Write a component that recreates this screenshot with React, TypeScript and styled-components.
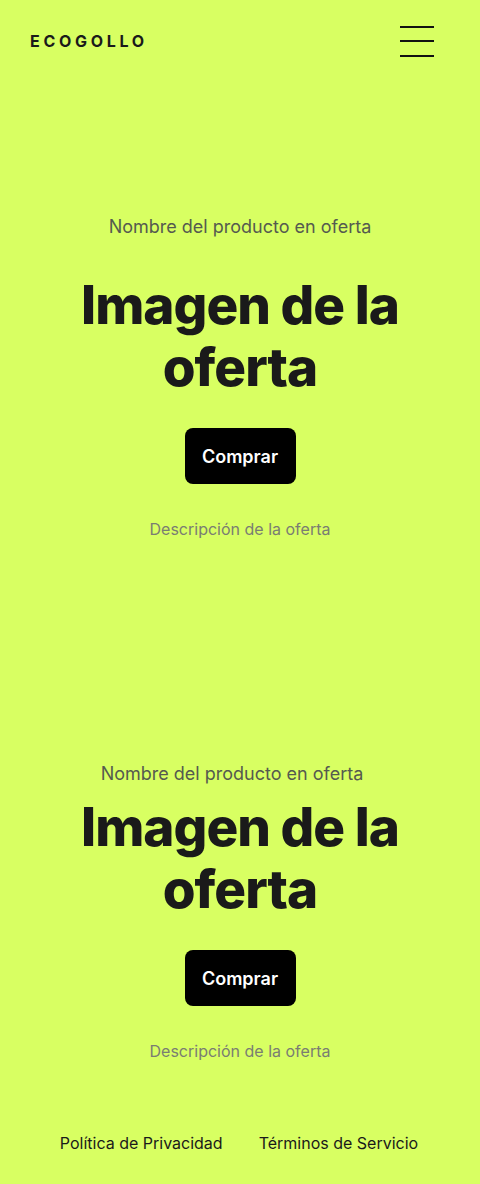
import { createGlobalStyle, styled } from "styled-components"

const GlobalStyle = createGlobalStyle`
  * { box-sizing: border-box; }
  body {
    margin: 0;
    background: #d8ff62;
    font-family: Inter, "Noto Sans", sans-serif;
    color: #1a1a1a;
  }
`

const Page = styled.div`
  min-height: 1184px;
  background: #d8ff62;
  display: flex;
  flex-direction: column;
`

const Header = styled.header`
  display: flex;
  justify-content: space-between;
  align-items: center;
  height: 82px;
  padding: 0 46px 0 30px;
`

const Logo = styled.div`
  font-family: Inter, sans-serif;
  font-weight: 700;
  font-size: 16px;
  letter-spacing: 3.7px;
  color: #1a1a1a;
`

const Burger = styled.button`
  width: 34px;
  height: 31px;
  padding: 0;
  border: 0;
  background: none;
  display: flex;
  flex-direction: column;
  justify-content: space-between;
  span {
    display: block;
    height: 2px;
    background: #111;
  }
`

const Offer = styled.section<{ $top: number }>`
  display: flex;
  flex-direction: column;
  align-items: center;
  text-align: center;
  padding-top: ${(p) => p.$top}px;
`

const ProductName = styled.p<{ $gap: number; $shift: number }>`
  margin: 0 0 ${(p) => p.$gap}px;
  padding-right: ${(p) => p.$shift * 2}px;
  font-size: 18px;
  line-height: 24px;
  color: #555a4f;
`

const Title = styled.h2`
  margin: 0;
  font-size: 53px;
  line-height: 62px;
  font-weight: 800;
  letter-spacing: -1px;
  color: #1a1a1a;
  width: 360px;
`

const BuyButton = styled.button`
  margin-top: 30px;
  width: 111px;
  height: 56px;
  border: 0;
  border-radius: 8px;
  background: #000;
  color: #fff;
  font-family: Inter, sans-serif;
  font-size: 18px;
  font-weight: 600;
`

const Description = styled.p`
  margin: 34px 0 0;
  font-size: 16px;
  line-height: 22px;
  color: #7a7d72;
`

const Footer = styled.footer`
  margin-top: auto;
  display: flex;
  justify-content: center;
  gap: 36px;
  padding: 0 2px 30px 0;
  a {
    font-size: 16px;
    line-height: 22px;
    color: #1a1a1a;
    text-decoration: none;
  }
`

function OfferBlock({ top, gap, shift = 0 }: { top: number; gap: number; shift?: number }) {
  return (
    <Offer $top={top}>
      <ProductName $gap={gap} $shift={shift}>
        Nombre del producto en oferta
      </ProductName>
      <Title>Imagen de la oferta</Title>
      <BuyButton>Comprar</BuyButton>
      <Description>Descripción de la oferta</Description>
    </Offer>
  )
}

export default function App() {
  return (
    <Page>
      <GlobalStyle />
      <Header>
        <Logo>ECOGOLLO</Logo>
        <Burger aria-label="menu">
          <span />
          <span />
          <span />
        </Burger>
      </Header>
      <OfferBlock top={133} gap={35} />
      <OfferBlock top={222} gap={10} shift={8} />
      <Footer>
        <a href="#">Política de Privacidad</a>
        <a href="#">Términos de Servicio</a>
      </Footer>
    </Page>
  )
}
